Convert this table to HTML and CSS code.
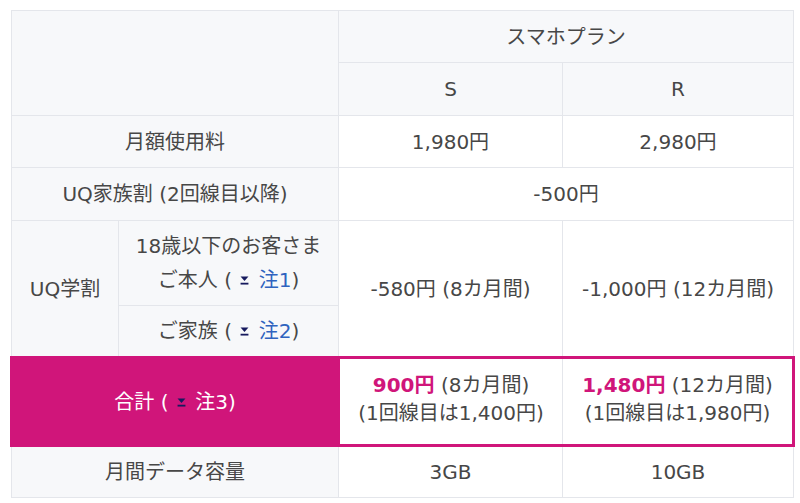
FILE: index.html
```html
<!DOCTYPE html>
<html lang="ja">
<head>
<meta charset="utf-8">
<title>料金プラン</title>
<link rel="stylesheet" href="styles.css">
</head>
<body>
<div class="wrap">
<table class="plan">
  <colgroup>
    <col class="c1"><col class="c2"><col class="c3"><col class="c4">
  </colgroup>
  <tr class="h52">
    <th colspan="2" rowspan="2"></th>
    <th colspan="2">スマホプラン</th>
  </tr>
  <tr class="h53">
    <th>S</th><th>R</th>
  </tr>
  <tr class="h52">
    <th colspan="2">月額使用料</th><td>1,980円</td><td>2,980円</td>
  </tr>
  <tr class="h53">
    <th colspan="2">UQ家族割 (2回線目以降)</th><td colspan="2">-500円</td>
  </tr>
  <tr class="h85">
    <th rowspan="2">UQ学割</th>
    <th class="tall">18歳以下のお客さま<br>ご本人 ( <a class="note" href="#n1"><svg class="ico" viewBox="0 0 8 8"><polygon points="0.5,0.5 7.5,0.5 4,4.5"/><rect x="0.5" y="6" width="7" height="1.6"/></svg> 注1</a>)</th>
    <td rowspan="2">-580円 (8カ月間)</td>
    <td rowspan="2">-1,000円 (12カ月間)</td>
  </tr>
  <tr class="h52">
    <th>ご家族 ( <a class="note" href="#n2"><svg class="ico" viewBox="0 0 8 8"><polygon points="0.5,0.5 7.5,0.5 4,4.5"/><rect x="0.5" y="6" width="7" height="1.6"/></svg> 注2</a>)</th>
  </tr>
  <tr class="total h88">
    <th colspan="2">合計 ( <a class="note" href="#n3"><svg class="ico" viewBox="0 0 8 8"><polygon points="0.5,0.5 7.5,0.5 4,4.5"/><rect x="0.5" y="6" width="7" height="1.6"/></svg> 注3</a>)</th>
    <td><strong>900円</strong> (8カ月間)<br>(1回線目は1,400円)</td>
    <td class="last"><strong>1,480円</strong> (12カ月間)<br>(1回線目は1,980円)</td>
  </tr>
  <tr class="h52">
    <th colspan="2">月間データ容量</th><td>3GB</td><td>10GB</td>
  </tr>
</table>
</div>
</body>
</html>
```
FILE: styles.css
```css
html, body {
  margin: 0;
  background: #fff;
}
.wrap {
  padding: 10px 0 0 10px;
}
.plan {
  border-collapse: collapse;
  table-layout: fixed;
  width: 782px;
  font-family: "DejaVu Sans", "Noto Sans CJK JP", sans-serif;
  font-size: 20px;
  color: #474747;
  border: 1px solid #e4e6eb;
}
.c1 { width: 107px; }
.c2 { width: 220px; }
.c3 { width: 224px; }
.c4 { width: 231px; }
.plan th, .plan td {
  border: 1px solid #e4e6eb;
  text-align: center;
  vertical-align: middle;
  padding: 0 4px;
  font-weight: normal;
  line-height: 28px;
}
.plan th {
  background: #f7f8fa;
}
.plan td {
  background: #fff;
}
.plan th.tall {
  line-height: 34px;
}
.h52 { height: 52px; }
.h53 { height: 53px; }
.h85 { height: 85px; }
.h88 { height: 88px; }
.note {
  color: #2f63bf;
  text-decoration: none;
}
.ico {
  width: 9px;
  height: 9px;
  fill: #171a5e;
  margin: 0 3px 0 2px;
  vertical-align: 2px;
}
.total th {
  background: #d0157a;
  border: 3px solid #d0157a;
  color: #fff;
}
.total th .note {
  color: #fff;
}
.total td {
  border-top: 3px solid #d0157a;
  border-bottom: 3px solid #d0157a;
  padding-bottom: 5px;
}
.total td.last {
  border-right: 3px solid #d0157a;
}
.total strong {
  color: #d0157a;
  font-weight: bold;
}
```
